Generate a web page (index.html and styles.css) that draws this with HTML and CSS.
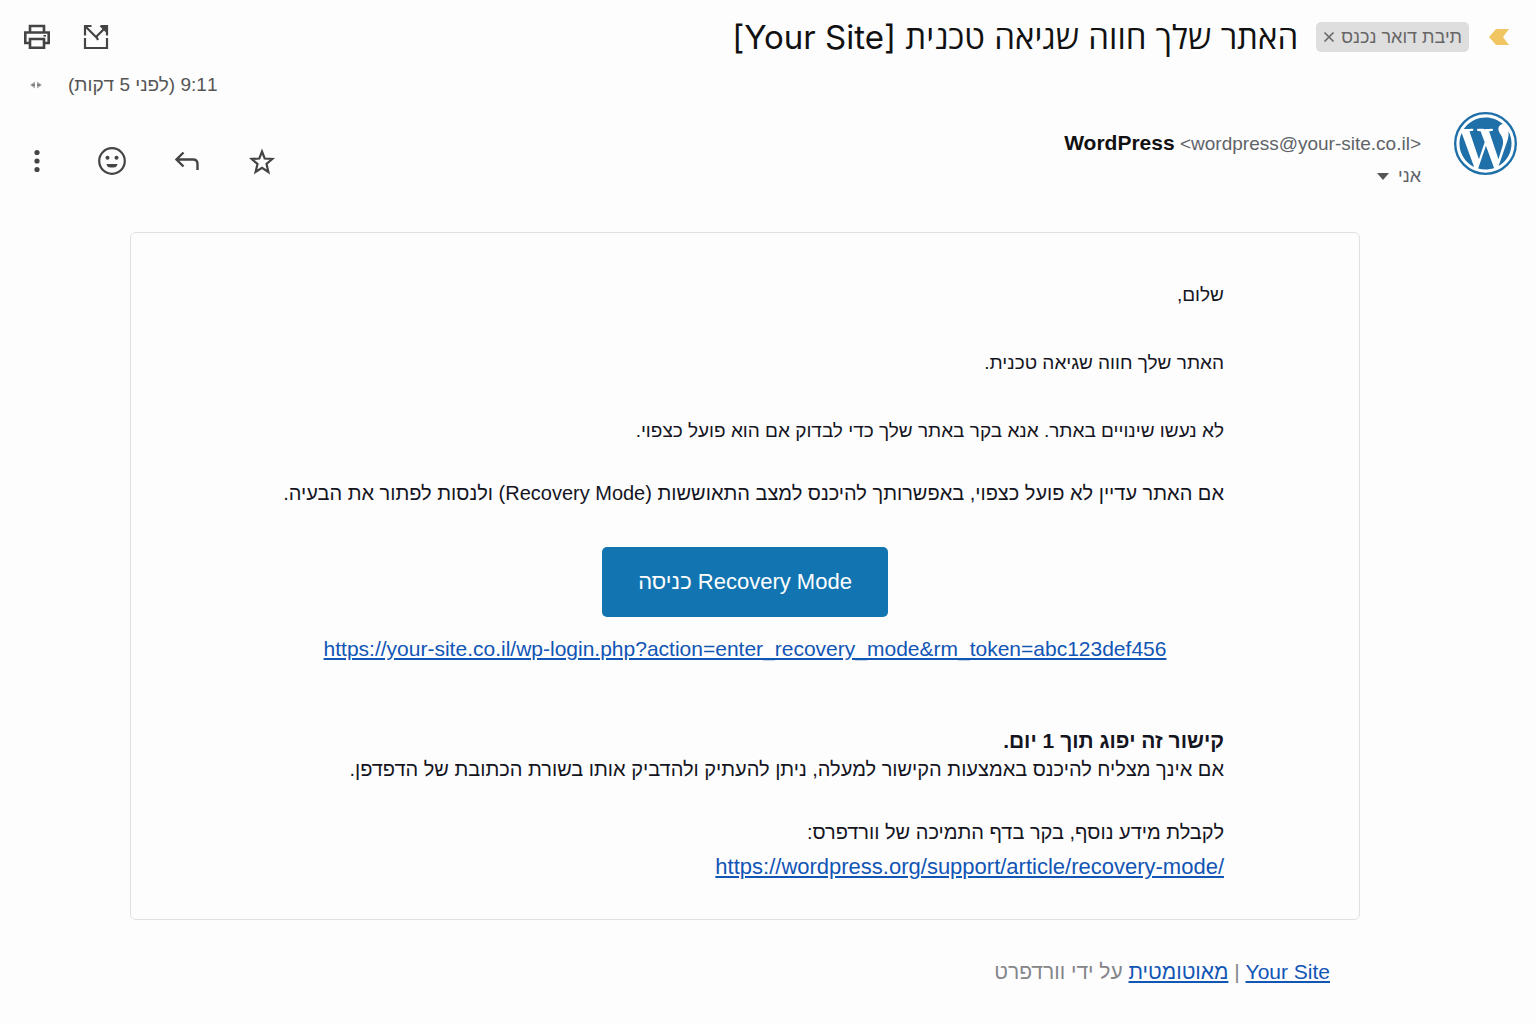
FILE: index.html
```html
<!DOCTYPE html>
<html lang="he" dir="rtl">
<head>
    <meta charset="UTF-8">
    <meta name="viewport" content="width=device-width, initial-scale=1.0">
    <title>האתר שלך חווה שגיאה טכנית</title>
    <link rel="stylesheet" href="styles.css">
</head>
<body>
    <header class="subject-bar">
        <svg class="important" viewBox="0 0 20 16" aria-hidden="true"><path d="M7 0h13l-6 8 6 8H7L0 8z" fill="#f0c562"/></svg>
        <span class="label">
            תיבת דואר נכנס
            <button type="button" aria-label="הסרת התווית"><svg viewBox="0 0 12 12"><path d="M1.500 1.500l9 9M10.500 1.500l-9 9" fill="none" stroke="#666" stroke-width="1.600"/></svg></button>
        </span>
        <h1>האתר שלך חווה שגיאה טכנית [Your Site]</h1>
        <div class="subject-actions">
            <button type="button" aria-label="פתיחה בחלון חדש">
                <svg viewBox="0 0 28 28" fill="none" stroke="#444" stroke-width="2.200"><path d="M3 12.500V3h6.500M18.500 3H25v9.500M3 15v10h22V15M3.500 3.500L14 14 24.500 3.500M14 13l2 4"/><path d="M17.500 3H25v7.500z" fill="#444" stroke="none"/></svg>
            </button>
            <button type="button" aria-label="הדפסה">
                <svg viewBox="0 0 28 28" fill="none" stroke="#444" stroke-width="2.600"><path d="M7 9V3h14v6M7 20H2.300V9.500h23.400V20H21"/><path d="M7 16h14v8.700H7z"/><path d="M20.500 12.800h2.500" stroke-width="1.600"/></svg>
            </button>
        </div>
    </header>

    <div class="time-row">
        <span>9:11 (לפני 5 דקות)</span>
        <svg viewBox="0 0 12 8" aria-hidden="true"><path d="M0 4l5-3.500v7zM12 4L7 .5v7z" fill="#aaa"/><path d="M2 4h3M7 4h3" stroke="#777" stroke-width="1.600"/></svg>
    </div>

    <section class="sender-row">
        <svg class="avatar" viewBox="0 0 24 24" role="img" aria-label="WordPress">
            <circle cx="12" cy="12" r="11.550" fill="#fff" stroke="#1f6fa8" stroke-width=".9"/>
            <path transform="translate(.96 .96) scale(.92)" fill="#1f6fa8" d="M21.469 6.825c.84 1.537 1.318 3.300 1.318 5.175 0 3.979-2.156 7.456-5.363 9.325l3.295-9.527c.615-1.540.820-2.771.820-3.864 0-.405-.026-.780-.070-1.110m-7.981.105c.647-.030 1.232-.105 1.232-.105.582-.075.514-.930-.067-.899 0 0-1.755.135-2.880.135-1.064 0-2.850-.150-2.850-.150-.585-.030-.661.855-.075.885 0 0 .540.061 1.125.090l1.680 4.605-2.370 7.080L5.354 6.900c.649-.030 1.234-.100 1.234-.100.585-.075.516-.930-.065-.896 0 0-1.746.138-2.874.138-.200 0-.438-.008-.690-.015C4.911 3.150 8.235 1.215 12 1.215c2.809 0 5.365 1.072 7.286 2.833-.046-.003-.091-.009-.141-.009-1.060 0-1.812.923-1.812 1.914 0 .890.513 1.643 1.060 2.531.411.720.890 1.643.890 2.977 0 .915-.354 1.994-.821 3.479l-1.075 3.585-3.900-11.610zM12 22.784c-1.059 0-2.081-.153-3.048-.437l3.237-9.406 3.315 9.087c.024.053.050.101.078.149-1.120.393-2.325.609-3.582.609M1.211 12c0-1.564.336-3.050.935-4.390L7.290 21.709C3.694 19.960 1.212 16.271 1.211 12"/>
        </svg>
        <div class="sender">
            <div dir="ltr"><strong>WordPress</strong> <span>&lt;wordpress@your-site.co.il&gt;</span></div>
            <button type="button" class="recipient">אני <svg viewBox="0 0 12 7"><path d="M0 0h12L6 7z" fill="#555"/></svg></button>
        </div>
        <div class="mail-actions">
            <button type="button" aria-label="סימון בכוכב">
                <svg viewBox="0 0 28 28" fill="none" stroke="#444" stroke-width="2.200"><path d="M14 4.500l2.700 7 7.600.5-5.800 5 1.900 8L14 20.800 7.600 25l1.900-8-5.800-5 7.600-.5z"/></svg>
            </button>
            <button type="button" aria-label="השבה">
                <svg viewBox="0 0 28 28" fill="none" stroke="#444" stroke-width="2.400"><path d="M10.500 5.500L3.500 12.500l7 7M3.500 12.500H20q4.500 0 4.500 4.500v6"/></svg>
            </button>
            <button type="button" aria-label="הוספת תגובת אמוג'י">
                <svg viewBox="0 0 28 28"><circle cx="14" cy="14" r="12.800" fill="none" stroke="#444" stroke-width="2.200"/><circle cx="9.500" cy="10.800" r="2" fill="#444"/><circle cx="18.500" cy="10.800" r="2" fill="#444"/><path d="M8.500 17h11q-.7 3.500-4 3.500h-3q-3.300 0-4-3.500z" fill="#444"/></svg>
            </button>
            <button type="button" aria-label="עוד">
                <svg viewBox="0 0 28 28" fill="#444"><circle cx="14" cy="5.500" r="2.600"/><circle cx="14" cy="14" r="2.600"/><circle cx="14" cy="22.500" r="2.600"/></svg>
            </button>
        </div>
    </section>

    <main class="message">
        <div class="intro">
            <p>שלום,</p>
            <p>האתר שלך חווה שגיאה טכנית.</p>
            <p>לא נעשו שינויים באתר. אנא בקר באתר שלך כדי לבדוק אם הוא פועל כצפוי.</p>
        </div>
        <p>אם האתר עדיין לא פועל כצפוי, באפשרותך להיכנס למצב התאוששות (Recovery Mode) ולנסות לפתור את הבעיה.</p>
        <div class="enter">
            <a class="enter-button" href="#">Recovery Mode כניסה</a>
            <a class="enter-link" href="#" dir="ltr">https://your-site.co.il/wp-login.php?action=enter_recovery_mode&amp;rm_token=abc123def456</a>
        </div>
        <p class="expiry"><strong>קישור זה יפוג תוך 1 יום.</strong><br>אם אינך מצליח להיכנס באמצעות הקישור למעלה, ניתן להעתיק ולהדביק אותו בשורת הכתובת של הדפדפן.</p>
        <p class="more">לקבלת מידע נוסף, בקר בדף התמיכה של וורדפרס:</p>
        <a class="support-link" href="#" dir="ltr">https://wordpress.org/support/article/recovery-mode/</a>
    </main>

    <footer><a href="#">Your Site</a> | <a href="#">מאוטומטית</a> על ידי וורדפרט</footer>
</body>
</html>
```

FILE: styles.css
```css
* {
    box-sizing: border-box;
}
body {
    margin: 0;
    background-color: #fdfdfd;
    color: #15151f;
    font-family: "Liberation Sans", Arial, sans-serif;
    font-size: 20px;
    line-height: 28px;
}
button {
    display: flex;
    align-items: center;
    padding: 0;
    border: none;
    background: none;
    color: inherit;
    font: inherit;
    cursor: pointer;
}
svg {
    display: block;
}
a {
    color: #1155b5;
    text-underline-offset: 2px;
}
.subject-bar {
    display: flex;
    align-items: center;
    padding: 14px 27px 0 23px;
}
.important {
    width: 20px;
    height: 16px;
}
.label {
    display: flex;
    align-items: center;
    gap: 6px;
    height: 30px;
    margin: 0 20px 0 18px;
    padding: 0 7px;
    border-radius: 5px;
    background-color: #dedede;
    color: #666;
    font-size: 18px;
}
.label svg {
    width: 12px;
    height: 12px;
}
h1 {
    margin: 0;
    color: #111;
    font-family: "Inter", "Open Sans", sans-serif;
    font-size: 33px;
    font-weight: 400;
    line-height: 46px;
}
.subject-actions {
    display: flex;
    gap: 31px;
    margin-right: auto;
}
.subject-actions svg, .mail-actions svg {
    width: 28px;
    height: 28px;
}
.time-row {
    display: flex;
    align-items: center;
    justify-content: flex-end;
    gap: 26px;
    padding: 11px 0 0 30px;
    color: #555;
    font-size: 19px;
}
.time-row svg {
    width: 12px;
    height: 8px;
}
.sender-row {
    display: flex;
    align-items: flex-start;
    padding: 13px 19px 0 23px;
}
.avatar {
    width: 63px;
    height: 63px;
}
.sender {
    margin-right: 33px;
    padding-top: 17px;
    color: #5f6368;
    font-size: 19px;
}
.sender strong {
    color: #111;
    font-size: 21px;
}
.recipient {
    gap: 9px;
    margin-top: 4px;
    font-size: 18px;
}
.recipient svg {
    width: 12px;
    height: 7px;
}
.mail-actions {
    display: flex;
    gap: 47px;
    margin-right: auto;
    padding-top: 35px;
}
.message {
    margin: 42px 176px 0 130px;
    padding: 48px 135px 38px;
    border: 1px solid #e0e0e0;
    border-radius: 6px;
}
.message p {
    margin: 0 0 40px;
}
.intro {
    margin-bottom: 34px;
    font-size: 19px;
}
.intro p:last-child {
    margin-bottom: 0;
}
.enter {
    display: flex;
    flex-direction: column;
    align-items: center;
    gap: 18px;
    margin-bottom: 64px;
}
.enter-button {
    padding: 21px 36px;
    border-radius: 5px;
    background-color: #1275b1;
    color: #fff;
    font-size: 22px;
    text-decoration: none;
}
.enter-link, .expiry strong {
    font-size: 21px;
}
.message .expiry {
    margin-bottom: 35px;
}
.message .more {
    margin-bottom: 7px;
}
.support-link {
    display: block;
    width: fit-content;
    font-size: 22px;
}
footer {
    margin: 38px 206px 38px 0;
    color: #85858a;
    font-size: 21px;
}
```
